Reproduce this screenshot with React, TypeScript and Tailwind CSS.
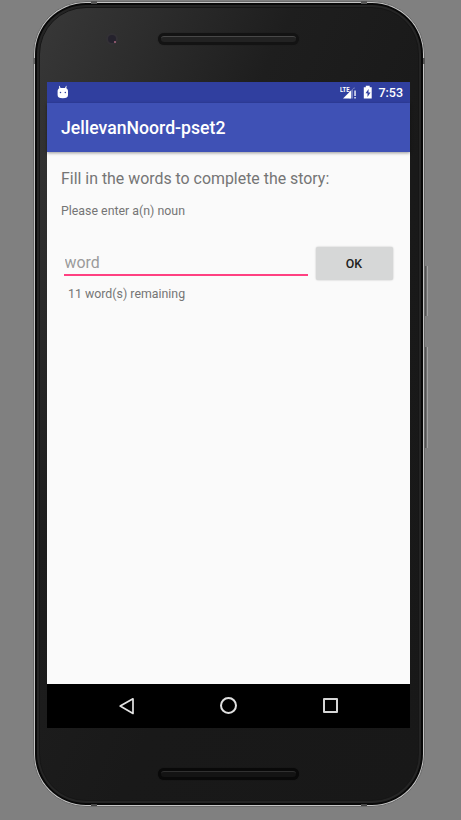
import React from "react";

function Speaker() {
  return (
    <div className="ml-[111px] h-[12px] w-[141px] rounded-full bg-[#131313] p-[3px] shadow-[0_0_1px_#1a1a1a]">
      <div className="h-[6px] rounded-full border-t border-[#484848] bg-[#222]" />
    </div>
  );
}

function LowerSpeaker() {
  return (
    <div className="ml-[111px] h-[12px] w-[141px] rounded-full bg-[#090909] p-[3px] shadow-[0_0_1px_#0c0c0c]">
      <div className="h-[6px] rounded-full border-t border-[#303030] bg-[#131313]" />
    </div>
  );
}

function StatusBar() {
  return (
    <div className="flex h-[21px] items-center bg-[#303f9f] pl-[10px] pr-[7px]">
      <svg className="-mt-[2px]" width="12" height="14" viewBox="0 0 12 14" fill="#fff">
        <path d="M2.4 .8 3.6 3H8L9.1.8l.5.3-.3 2.200c1.200.5 1.700 1.700 1.700 3v3.700c0 2.300-1.600 3.300-5.200 3.300S.6 12.300.6 10V6.300c0-1.400.6-2.500 1.700-3L1.900 1z" />
        <circle cx="3.500" cy="7.500" r=".75" fill="#303f9f" />
        <circle cx="8.300" cy="7.500" r=".75" fill="#303f9f" />
      </svg>
      <div className="ml-auto flex items-center">
        <div className="relative h-[14px] w-[17px]">
          <span className="absolute left-0 top-0 origin-left scale-x-[0.74] text-[8px] font-bold leading-[7px] text-white">LTE</span>
          <svg className="absolute left-[3px] top-0" width="14" height="13" viewBox="0 0 14 13">
            <path d="M6 6.500 11.500 1v11.500H6z" fill="#7580c0" />
            <path d="M0 12.500 8 4.500v8z" fill="#fff" />
            <path d="M10 3h4v10h-4z" fill="#303f9f" />
            <path d="M11.300 4.500h1.500V10h-1.500zm0 6.500h1.500v1.500h-1.500z" fill="#e8eaf6" />
          </svg>
        </div>
        <svg className="-mt-px ml-[6px]" width="10" height="14" viewBox="0 0 10 14">
          <path d="M.8 2.300h2V.8h3.900v1.500h2v11.200H.8z" fill="#fff" />
          <path d="M5.600 4 2.500 8.200h2V12l3-4.500h-2z" fill="#303f9f" />
        </svg>
        <span className="ml-[5px] text-[12.500px] font-medium leading-[21px] text-white">7:53</span>
      </div>
    </div>
  );
}

function NavBar() {
  return (
    <div className="grid h-[44px] grid-cols-[102px_102px_102px] justify-center bg-black pb-px">
      <div className="flex items-center justify-center">
        <svg width="18" height="18" viewBox="0 0 18 18" fill="none" stroke="#e4e4e4" strokeWidth="1.700" strokeLinejoin="round">
          <path d="M15 1.800v14.600L2.200 9.100z" />
        </svg>
      </div>
      <div className="flex items-center justify-center">
        <div className="h-[17px] w-[17px] rounded-full border-2 border-[#e0e0e0]" />
      </div>
      <div className="flex items-center justify-center">
        <div className="h-[15px] w-[15px] rounded-[1px] border-2 border-[#d6d6d6]" />
      </div>
    </div>
  );
}

function Screen() {
  return (
    <div className="flex h-[646px] w-[363px] flex-col bg-[#fafafa]">
      <StatusBar />
      <header className="z-10 flex h-[49px] items-center bg-[#3f51b5] pl-[14px] text-[17.650px] font-medium text-white shadow-[0_1px_3px_rgba(0,0,0,0.4)]">
        <h1 className="pt-[2px]">JellevanNoord-pset2</h1>
      </header>
      <main className="flex-1 px-[14px] pt-[16px] text-[#757575]">
        <p className="text-[15.900px] leading-[21px]">Fill in the words to complete the story:</p>
        <p className="mt-[14px] text-[12.360px] leading-[16px]">Please enter a(n) noun</p>
        <div className="mt-[27px] flex">
          <div className="ml-[3px] flex h-[30px] w-[244px] items-center border-b-2 border-[#ff4081] pt-[4px]">
            <input
              aria-label="word"
              placeholder="word"
              className="w-full bg-transparent pl-[0.500px] pt-px text-[15.900px] leading-[21px] outline-none placeholder:text-[#9b9b9b]"
            />
          </div>
          <button className="ml-[7.500px] mt-[1px] h-[33px] w-[77px] rounded-[2px] bg-[#d6d7d7] pt-px text-[12.360px] font-medium text-[#212121] shadow-[0_0_2px_rgba(0,0,0,0.25)]">
            OK
          </button>
        </div>
        <p className="ml-[7px] mt-[6px] text-[12.360px] leading-[16px]">11 word(s) remaining</p>
      </main>
      <NavBar />
    </div>
  );
}

export default function App() {
  return (
    <div className="relative h-[820px] w-[461px] overflow-hidden bg-[#808080] pl-[33px] pt-px font-['Roboto',sans-serif]">
      <div className="h-[806px] w-[392px] rounded-[53px] border border-[#6a6a6a] bg-[#c4c4c4] p-px">
        <div className="h-[802px] w-[388px] rounded-[51px] bg-[#080808] p-[2px]">
          <div className="h-[798px] w-[384px] rounded-[49px] bg-[#242424] p-[2px]">
            <div className="h-[794px] w-[380px] rounded-[47px] border border-[#161616] bg-[linear-gradient(115deg,#383838_0%,#2d2d2d_15%,#1e1e1e_34%,#191919_60%,#181818_100%)] pl-[7px]">
              <div className="h-[74px] w-[363px] pt-[25px]">
                <Speaker />
              </div>
              <Screen />
              <div className="w-[363px] pt-[40px]">
                <LowerSpeaker />
              </div>
            </div>
          </div>
        </div>
      </div>
      <div className="absolute left-[106px] top-[33px] flex h-[12px] w-[12px] items-center justify-center rounded-full bg-[#333135]">
        <div className="flex h-[8px] w-[8px] items-end justify-end rounded-full bg-[#25222d]">
          <div className="h-[2px] w-[2px] rounded-full bg-[#a9657c]" />
        </div>
      </div>
      <div className="absolute left-[425px] top-[266px] h-[50px] w-[3px] border-l border-r border-l-[#555] border-r-[#a0a0a0] bg-[#707070]" />
      <div className="absolute left-[425px] top-[347px] h-[101px] w-[3px] border-l border-r border-l-[#555] border-r-[#a0a0a0] bg-[#707070]" />
      <div className="absolute left-[91px] top-[1px] h-[3px] w-[6px] bg-[#555]" />
      <div className="absolute left-[361px] top-[1px] h-[3px] w-[6px] bg-[#555]" />
      <div className="absolute left-[91px] top-[804px] h-[2px] w-[6px] bg-[#444]" />
      <div className="absolute left-[361px] top-[804px] h-[2px] w-[6px] bg-[#444]" />
      <div className="absolute left-[33px] top-[58px] h-[6px] w-[2px] bg-[#666]" />
      <div className="absolute left-[423px] top-[58px] h-[6px] w-[2px] bg-[#555]" />
    </div>
  );
}
